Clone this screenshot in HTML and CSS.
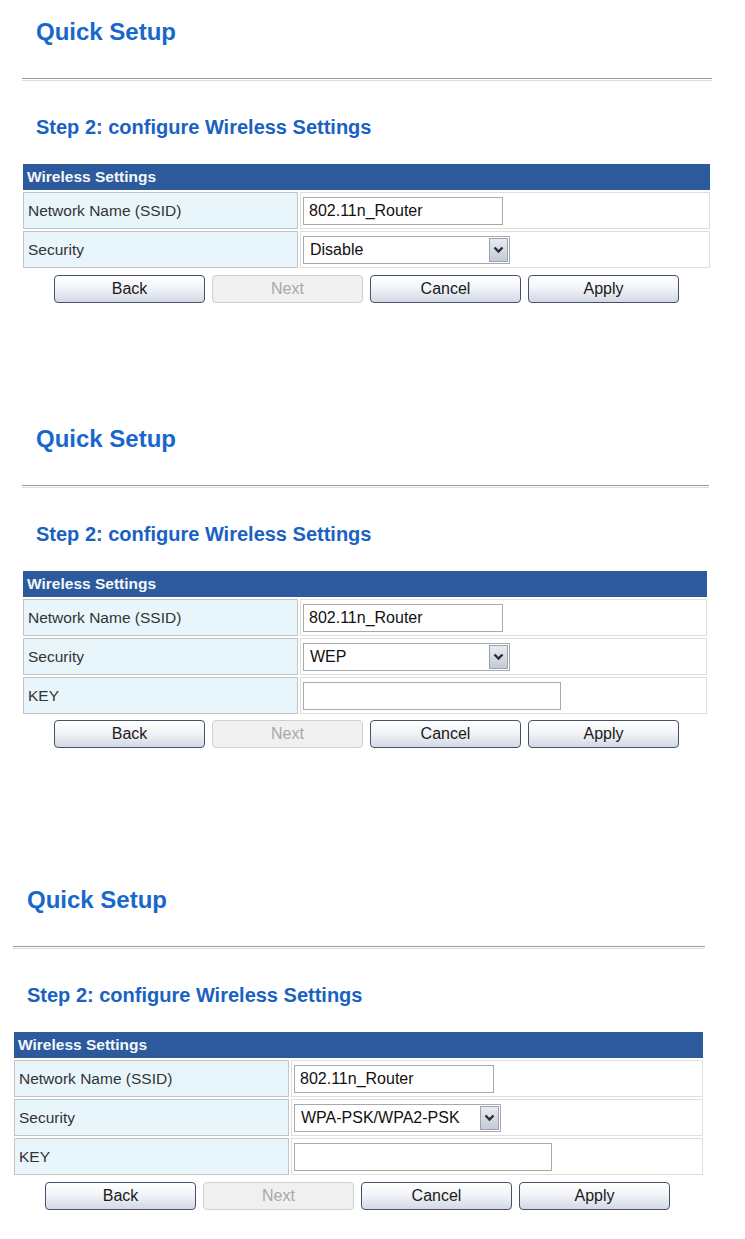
FILE: index.html
```html
<!DOCTYPE html>
<html lang="en">
<head>
<meta charset="utf-8">
<title>Quick Setup</title>
<link rel="stylesheet" href="styles.css">
</head>
<body>

<section class="panel p1">
  <h1 class="title">Quick Setup</h1>
  <hr class="rule">
  <h2 class="step">Step 2: configure Wireless Settings</h2>
  <table class="ws">
    <tr><th colspan="2">Wireless Settings</th></tr>
    <tr>
      <td class="lbl">Network Name (SSID)</td>
      <td class="val"><input class="txt ssid" type="text" value="802.11n_Router"></td>
    </tr>
    <tr>
      <td class="lbl">Security</td>
      <td class="val">
        <div class="sel">
          <select><option>Disable</option></select>
          <span class="arrow"><svg width="11" height="8" viewBox="0 0 11 8"><path d="M1.5 1.5 L5.5 5.5 L9.5 1.5" fill="none" stroke="#2a2e36" stroke-width="2.4"/></svg></span>
        </div>
      </td>
    </tr>
  </table>
  <div class="btns">
    <button class="btn">Back</button>
    <button class="btn" disabled>Next</button>
    <button class="btn">Cancel</button>
    <button class="btn">Apply</button>
  </div>
</section>

<section class="panel p2">
  <h1 class="title">Quick Setup</h1>
  <hr class="rule">
  <h2 class="step">Step 2: configure Wireless Settings</h2>
  <table class="ws">
    <tr><th colspan="2">Wireless Settings</th></tr>
    <tr>
      <td class="lbl">Network Name (SSID)</td>
      <td class="val"><input class="txt ssid" type="text" value="802.11n_Router"></td>
    </tr>
    <tr>
      <td class="lbl">Security</td>
      <td class="val">
        <div class="sel">
          <select><option>WEP</option></select>
          <span class="arrow"><svg width="11" height="8" viewBox="0 0 11 8"><path d="M1.5 1.5 L5.5 5.5 L9.5 1.5" fill="none" stroke="#2a2e36" stroke-width="2.4"/></svg></span>
        </div>
      </td>
    </tr>
    <tr>
      <td class="lbl">KEY</td>
      <td class="val"><input class="txt key" type="text" value=""></td>
    </tr>
  </table>
  <div class="btns">
    <button class="btn">Back</button>
    <button class="btn" disabled>Next</button>
    <button class="btn">Cancel</button>
    <button class="btn">Apply</button>
  </div>
</section>

<section class="panel p3">
  <h1 class="title">Quick Setup</h1>
  <hr class="rule">
  <h2 class="step">Step 2: configure Wireless Settings</h2>
  <table class="ws">
    <tr><th colspan="2">Wireless Settings</th></tr>
    <tr>
      <td class="lbl">Network Name (SSID)</td>
      <td class="val"><input class="txt ssid" type="text" value="802.11n_Router"></td>
    </tr>
    <tr>
      <td class="lbl">Security</td>
      <td class="val">
        <div class="sel">
          <select><option>WPA-PSK/WPA2-PSK</option></select>
          <span class="arrow"><svg width="11" height="8" viewBox="0 0 11 8"><path d="M1.5 1.5 L5.5 5.5 L9.5 1.5" fill="none" stroke="#2a2e36" stroke-width="2.4"/></svg></span>
        </div>
      </td>
    </tr>
    <tr>
      <td class="lbl">KEY</td>
      <td class="val"><input class="txt key" type="text" value=""></td>
    </tr>
  </table>
  <div class="btns">
    <button class="btn">Back</button>
    <button class="btn" disabled>Next</button>
    <button class="btn">Cancel</button>
    <button class="btn">Apply</button>
  </div>
</section>

</body>
</html>
```

FILE: styles.css
```css
html, body {
  margin: 0;
  padding: 0;
  background: #ffffff;
}

body {
  font-family: "Liberation Sans", Arial, sans-serif;
  color: #222;
}

.panel {
  display: flex;
  flex-direction: column;
}

.p1 { margin-left: 22px; width: 690px; padding-top: 18px; }
.p2 { margin-left: 22px; width: 687px; margin-top: 122px; }
.p3 { margin-left: 13px; width: 692px; margin-top: 138px; }

.title {
  margin: 0;
  padding-left: 14px;
  font-size: 24px;
  line-height: 27px;
  font-weight: bold;
  color: #1767cc;
}

.rule {
  margin: 33px 0 0 0;
  border: 0;
  height: 1px;
  border-top: 1px solid #9a9a9a;
  border-bottom: 1px solid #dcdcdc;
  width: 100%;
}

.step {
  margin: 35px 0 0 0;
  padding-left: 14px;
  font-size: 20px;
  line-height: 23px;
  font-weight: bold;
  color: #1a62c2;
}

.ws {
  margin-top: 23px;
  margin-left: -1px;
  width: calc(100% + 1px);
  border-collapse: separate;
  border-spacing: 2px;
  font-size: 15.5px;
}

.ws th {
  height: 26px;
  padding: 0 0 0 4px;
  background: #2c5a9d;
  color: #f4f7fb;
  font-weight: bold;
  text-align: left;
  box-sizing: border-box;
}

.ws td {
  height: 37px;
  box-sizing: border-box;
  padding: 0;
}

.lbl {
  width: 275px;
  padding-left: 4px !important;
  background: #e8f6fc;
  border: 1px solid #c4c4c4;
  color: #333;
}

.val {
  background: #ffffff;
  border: 1px solid #dedede;
  padding-left: 2px !important;
}

.txt {
  display: block;
  box-sizing: border-box;
  height: 28px;
  margin: 0;
  padding: 0 5px;
  border: 1px solid #a9a9a9;
  background: #fff;
  font-family: "Liberation Sans", Arial, sans-serif;
  font-size: 16px;
  color: #111;
}

.ssid { width: 200px; }
.key { width: 258px; }

.sel {
  position: relative;
  width: 207px;
  height: 28px;
}

.sel select {
  -webkit-appearance: none;
  appearance: none;
  box-sizing: border-box;
  width: 100%;
  height: 28px;
  margin: 0;
  padding: 0 24px 0 6px;
  border: 1px solid #a5a9b0;
  border-radius: 0;
  background: #fff;
  font-family: "Liberation Sans", Arial, sans-serif;
  font-size: 16px;
  color: #111;
}

.sel .arrow {
  position: absolute;
  right: 2px;
  top: 2px;
  width: 19px;
  height: 24px;
  box-sizing: border-box;
  border: 1px solid #9aa2b0;
  background: linear-gradient(#e8ebf1, #c4cad6);
  display: flex;
  align-items: center;
  justify-content: center;
  pointer-events: none;
}

.btns {
  display: flex;
  gap: 7px;
  margin-top: 5px;
  padding-left: 32px;
}

.p2 .btns { margin-top: 4px; }
.p3 .btns { margin-top: 5px; }

.btn {
  width: 151px;
  height: 28px;
  margin: 0;
  padding: 0;
  box-sizing: border-box;
  border: 1px solid #44526a;
  border-radius: 4px;
  background: linear-gradient(#ffffff 0%, #f2f4f8 45%, #d3d8e4 100%);
  font-family: "Liberation Sans", Arial, sans-serif;
  font-size: 16px;
  color: #1a1a1a;
}

.btn:disabled {
  border-color: #cfcfcf;
  background: #f0f0f0;
  color: #a8a8a8;
}
```
